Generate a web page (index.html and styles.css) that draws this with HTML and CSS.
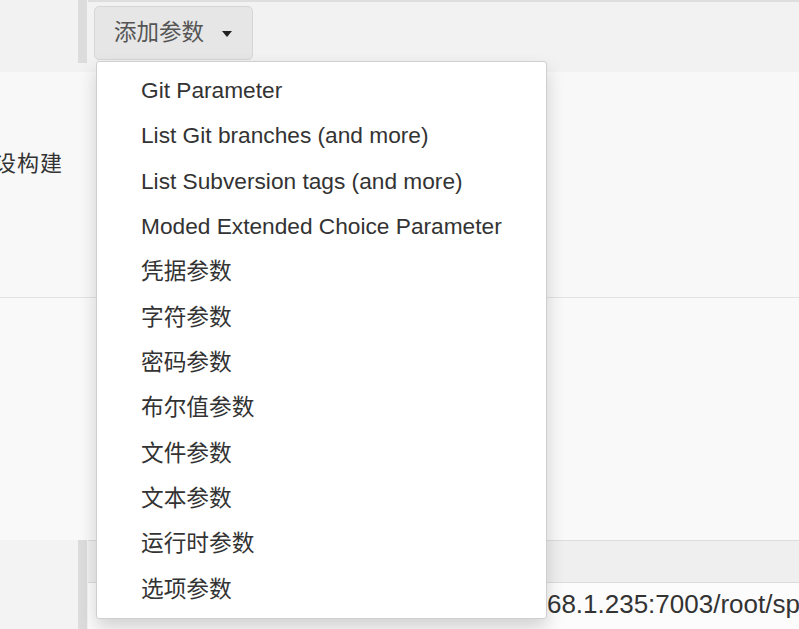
FILE: index.html
```html
<!DOCTYPE html>
<html lang="zh-CN">
<head>
<meta charset="utf-8">
<title>添加参数</title>
<link rel="stylesheet" href="styles.css">
</head>
<body>
<div class="page">
  <div class="row row-actions">
    <div class="label-cell"></div>
    <div class="gutter"><div class="bar bar-top"></div></div>
    <div class="content-cell actions">
      <div class="add-param">
        <button class="btn" type="button">添加参数<span class="caret"></span></button>
        <ul class="menu">
          <li>Git Parameter</li>
          <li>List Git branches (and more)</li>
          <li>List Subversion tags (and more)</li>
          <li>Moded Extended Choice Parameter</li>
          <li>凭据参数</li>
          <li>字符参数</li>
          <li>密码参数</li>
          <li>布尔值参数</li>
          <li>文件参数</li>
          <li>文本参数</li>
          <li>运行时参数</li>
          <li>选项参数</li>
        </ul>
      </div>
    </div>
  </div>
  <div class="row row-param">
    <div class="label-cell"><span class="label">设构建</span></div>
    <div class="gutter"></div>
    <div class="content-cell"></div>
  </div>
  <div class="row row-blank">
    <div class="label-cell"></div>
    <div class="gutter"></div>
    <div class="content-cell"></div>
  </div>
  <div class="row row-repo">
    <div class="label-cell"></div>
    <div class="gutter"><div class="bar"></div></div>
    <div class="content-cell repo">
      <div class="repo-band"></div>
      <div class="repo-url">git@192.168.1.235:7003/root/spring-demo.git</div>
    </div>
  </div>
</div>
</body>
</html>
```

FILE: styles.css
```css
* { box-sizing: border-box; }
html, body {
  margin: 0;
  padding: 0;
  background: #f3f3f3;
  font-family: "Liberation Sans", "Noto Sans CJK SC", sans-serif;
  color: #333;
}
.page {
  width: 799px;
  height: 629px;
  overflow: hidden;
  display: flex;
  flex-direction: column;
}
.row {
  display: grid;
  grid-template-columns: 78px 10px 1fr;
}
.label-cell { overflow: hidden; }
.gutter { display: flex; flex-direction: column; }
.bar {
  width: 9px;
  background: #dcdcdc;
  flex: 1;
}
.bar-top { flex: none; height: 63px; }

/* row 1: actions */
.row-actions {
  height: 72px;
  background: #f2f2f2;
}
.actions {
  border-top: 2px solid #dedede;
  padding: 4px 0 0 6px;
}
.add-param {
  position: relative;
  width: 159px;
}
.btn {
  display: flex;
  align-items: center;
  height: 54px;
  width: 159px;
  padding: 0 0 0 19px;
  border: 1px solid #d6d6d6;
  border-radius: 5px;
  background: #e6e6e6;
  color: #555;
  font-family: "Liberation Sans", "Noto Sans CJK SC", sans-serif;
  font-size: 22.5px;
  line-height: 1;
}
.caret {
  display: inline-block;
  width: 0;
  height: 0;
  margin-left: 18px;
  margin-top: 2px;
  border-top: 6px solid #222;
  border-left: 5.5px solid transparent;
  border-right: 5.5px solid transparent;
}
.menu {
  position: absolute;
  top: 55px;
  left: 2px;
  width: 451px;
  margin: 0;
  padding: 6px 0 6px;
  list-style: none;
  background: #fff;
  border: 1px solid #cfcfcf;
  border-radius: 3px;
  box-shadow: 0 9px 18px rgba(0, 0, 0, 0.17);
  z-index: 10;
}
.menu li {
  padding-left: 44px;
  font-size: 22.7px;
  line-height: 45.33px;
  color: #333;
  white-space: nowrap;
}

/* row 2: parameter label */
.row-param {
  height: 226px;
  background: #f8f8f8;
  border-bottom: 1px solid #e2e2e2;
}
.row-param .label-cell { padding-top: 77px; }
.label {
  display: block;
  margin-left: -6px;
  letter-spacing: 1px;
  font-size: 22px;
  line-height: 30px;
  color: #333;
  white-space: nowrap;
}

/* row 3 */
.row-blank {
  height: 242px;
  background: #f9f9f9;
}

/* row 4: repository */
.row-repo {
  flex: 1;
}
.row-repo .label-cell { background: #f3f3f3; }
.repo {
  display: flex;
  flex-direction: column;
  background: #fcfcfc;
}
.repo-band {
  height: 43px;
  background: #efefef;
  border-top: 1px solid #dcdcdc;
  border-bottom: 1px solid #dcdcdc;
}
.repo-url {
  padding: 6px 0 0 340px;
  font-size: 26px;
  line-height: 30px;
  color: #333;
  white-space: nowrap;
}
```
